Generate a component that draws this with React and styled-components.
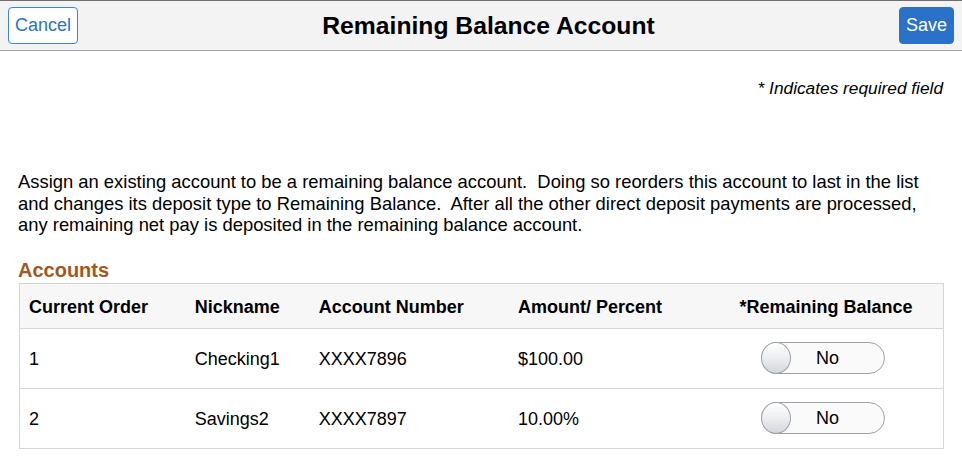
import React from "react";
import styled, { createGlobalStyle } from "styled-components";

const GlobalStyle = createGlobalStyle`
  body {
    margin: 0;
    background: #fff;
    font-family: "Liberation Sans", Arial, sans-serif;
    color: #000;
  }
`;

const Header = styled.header`
  display: flex;
  align-items: center;
  justify-content: space-between;
  height: 49px;
  padding: 0 8px;
  background: #f3f3f3;
  border-top: 1px solid #6f6f6f;
  border-bottom: 1px solid #a3a3a3;
`;

const Title = styled.h1`
  margin: 1px 0 0;
  font-size: 24.7px;
  font-weight: bold;
  color: #000;
`;

const HeaderButton = styled.button`
  height: 37px;
  padding: 0 6px;
  border-radius: 4px;
  font-family: inherit;
  font-size: 18px;
  border: 1px solid ${({ primary }) => (primary ? "#2a72c9" : "#3a86d6")};
  background: ${({ primary }) => (primary ? "#2a72c9" : "#fff")};
  color: ${({ primary }) => (primary ? "#fff" : "#2a72c9")};
`;

const Content = styled.main`
  padding: 0 19px 0 18px;
`;

const Required = styled.p`
  margin: 28px 0 0;
  text-align: right;
  font-style: italic;
  font-size: 17.3px;
  line-height: 19px;
`;

const Intro = styled.p`
  margin: 73px 0 0;
  font-size: 18.4px;
  line-height: 21.5px;
  white-space: pre-wrap;
`;

const SectionTitle = styled.h2`
  margin: 24px 0 2px;
  font-size: 20px;
  line-height: 21px;
  font-weight: bold;
  color: #a4571d;
`;

const Table = styled.table`
  width: 925px;
  margin-left: 1px;
  border-collapse: collapse;
  table-layout: fixed;
  border: 1px solid #d3d7dc;
  font-size: 18px;
`;

const HeadCell = styled.th`
  box-sizing: border-box;
  height: 45px;
  padding: 4px 9px 0;
  background: #f7f7f7;
  font-weight: bold;
  white-space: nowrap;
  text-align: ${({ center }) => (center ? "center" : "left")};
  border-bottom: 1px solid #d3d7dc;
`;

const Cell = styled.td`
  box-sizing: border-box;
  height: 60px;
  padding: 2px 9px 0;
  text-align: ${({ center }) => (center ? "center" : "left")};
  border-bottom: 1px solid #d3d7dc;
`;

const Toggle = styled.span`
  position: relative;
  display: inline-flex;
  align-items: center;
  justify-content: center;
  box-sizing: border-box;
  width: 124px;
  height: 32px;
  padding-left: 9px;
  margin: -2px 0 0 -6px;
  border: 1px solid #9da1a6;
  border-radius: 16px;
  background: #fafafa;
  font-size: 18px;
  vertical-align: middle;
`;

const Knob = styled.span`
  position: absolute;
  left: -1px;
  top: -1px;
  box-sizing: border-box;
  width: 30px;
  height: 32px;
  border-radius: 50%;
  border: 1px solid #9da1a6;
  background: linear-gradient(to bottom, #ffffff 0%, #eceef0 50%, #d3d6da 100%);
`;

const accounts = [
  { order: 1, nickname: "Checking1", number: "XXXX7896", amount: "$100.00" },
  { order: 2, nickname: "Savings2", number: "XXXX7897", amount: "10.00%" },
];

export default function App() {
  return (
    <>
      <GlobalStyle />
      <Header>
        <HeaderButton>Cancel</HeaderButton>
        <Title>Remaining Balance Account</Title>
        <HeaderButton primary>Save</HeaderButton>
      </Header>
      <Content>
        <Required>* Indicates required field</Required>
        <Intro>
          {"Assign an existing account to be a remaining balance account.  Doing so reorders this account to last in the list and changes its deposit type to Remaining Balance.  After all the other direct deposit payments are processed, any remaining net pay is deposited in the remaining balance account."}
        </Intro>
        <SectionTitle>Accounts</SectionTitle>
        <Table>
          <colgroup>
            <col style={{ width: 166 }} />
            <col style={{ width: 124 }} />
            <col style={{ width: 199 }} />
            <col style={{ width: 200 }} />
            <col style={{ width: 234 }} />
          </colgroup>
          <thead>
            <tr>
              <HeadCell>Current Order</HeadCell>
              <HeadCell>Nickname</HeadCell>
              <HeadCell>Account Number</HeadCell>
              <HeadCell>Amount/ Percent</HeadCell>
              <HeadCell center>*Remaining Balance</HeadCell>
            </tr>
          </thead>
          <tbody>
            {accounts.map((a) => (
              <tr key={a.order}>
                <Cell>{a.order}</Cell>
                <Cell>{a.nickname}</Cell>
                <Cell>{a.number}</Cell>
                <Cell>{a.amount}</Cell>
                <Cell center>
                  <Toggle>
                    <Knob />
                    No
                  </Toggle>
                </Cell>
              </tr>
            ))}
          </tbody>
        </Table>
      </Content>
    </>
  );
}
